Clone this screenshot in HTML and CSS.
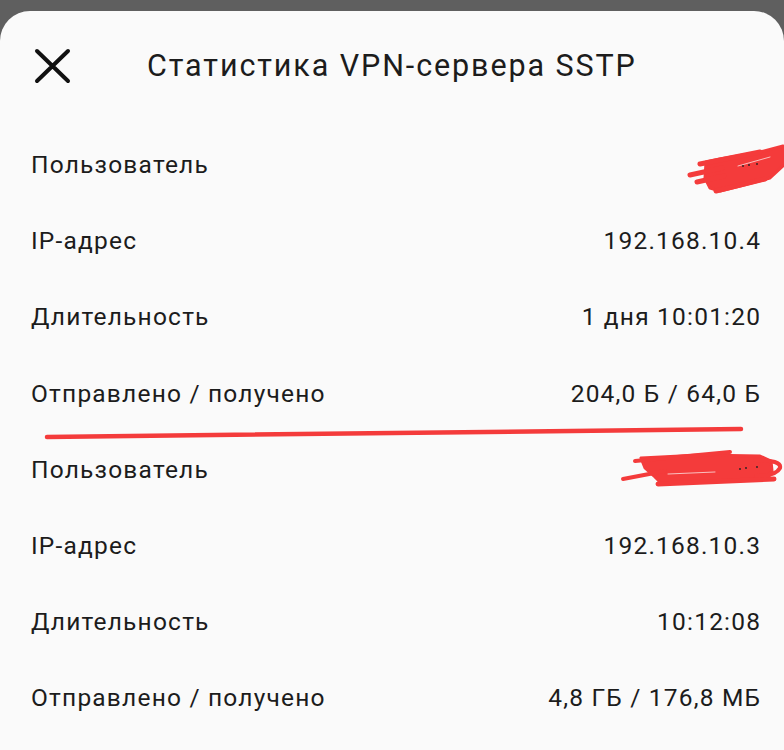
FILE: index.html
```html
<!DOCTYPE html>
<html lang="ru">
<head>
<meta charset="utf-8">
<link rel="stylesheet" href="styles.css">
</head>
<body>
<div class="sheet">
  <div class="header">
    <svg class="close" width="41" height="41" viewBox="0 0 41 41">
      <path d="M5 5 L36 35 M36 5 L5 35" stroke="#111" stroke-width="4" stroke-linecap="round" fill="none"/>
    </svg>
    <div class="title">Статистика VPN-сервера SSTP</div>
  </div>
  <div class="list">
    <div class="row"><span class="label">Пользователь</span><span class="value"></span></div>
    <div class="row"><span class="label">IP-адрес</span><span class="value">192.168.10.4</span></div>
    <div class="row"><span class="label">Длительность</span><span class="value">1 дня 10:01:20</span></div>
    <div class="row"><span class="label">Отправлено / получено</span><span class="value">204,0 Б / 64,0 Б</span></div>
    <div class="row"><span class="label">Пользователь</span><span class="value"></span></div>
    <div class="row"><span class="label">IP-адрес</span><span class="value">192.168.10.3</span></div>
    <div class="row"><span class="label">Длительность</span><span class="value">10:12:08</span></div>
    <div class="row"><span class="label">Отправлено / получено</span><span class="value">4,8 ГБ / 176,8 МБ</span></div>
  </div>
  <svg class="marks" width="784" height="750" viewBox="0 0 784 750">
    <g fill="#f43b3b" stroke="#f43b3b" stroke-width="3" stroke-linejoin="round">
      <path d="M706 162 L720 159 L760 152 L783 146 L784 165 L770 178 L740 186 L720 191 L710 188 L705 178 Z"/>
      <path d="M641 458 L700 455 L760 456 L771 461 L772 471 L768 478 L700 482 L662 484 L655 477 L645 468 Z"/>
    </g>
    <g stroke="#f43b3b" stroke-linecap="round" fill="none">
      <path d="M690 175 L722 168" stroke-width="5"/>
      <path d="M697 182 L724 176" stroke-width="5"/>
      <path d="M716 191 L765 179" stroke-width="5"/>
      <path d="M700 164 L760 152" stroke-width="5"/>
      <path d="M47 437 L741 429" stroke-width="4.5"/>
      <path d="M635 461 L730 452" stroke-width="4"/>
      <path d="M623 479 L665 471" stroke-width="4"/>
      <path d="M658 484 L774 479" stroke-width="5"/>
      <path d="M755 460 Q782 460 780 468 Q776 476 756 476" stroke-width="4"/>
    </g>
    <g stroke="#fbe0e0" stroke-width="1" stroke-linecap="round" fill="none" opacity="0.8">
      <path d="M738 166 L770 157"/>
      <path d="M668 474 L715 472"/>
    </g>
    <g fill="#222">
      <circle cx="743" cy="166" r="0.9"/>
      <circle cx="749" cy="165" r="0.9"/>
      <circle cx="757" cy="164" r="0.9"/>
      <circle cx="740" cy="469" r="0.9"/>
      <circle cx="746" cy="468" r="0.9"/>
      <circle cx="757" cy="467" r="0.9"/>
    </g>
  </svg>
</div>
</body>
</html>
```
FILE: styles.css
```css
html, body {
  margin: 0;
  padding: 0;
  background: #5f5f5f;
  height: 750px;
  overflow: hidden;
}
.sheet {
  position: relative;
  margin-top: 11px;
  height: 739px;
  background: #fafafa;
  border-radius: 30px 30px 0 0;
  font-family: Roboto, "Noto Sans", sans-serif;
  color: #1c1c1c;
}
.header {
  display: flex;
  align-items: center;
  height: 40px;
  padding: 35px 0 41px 32px;
}
.close {
  display: block;
  flex: none;
}
.title {
  margin-left: 74px;
  font-size: 30.5px;
  line-height: 40px;
  letter-spacing: 1.9px;
  white-space: nowrap;
}
.list {
  display: flex;
  flex-direction: column;
}
.row {
  display: flex;
  justify-content: space-between;
  align-items: center;
  height: 76.2px;
  padding: 0 22.8px 0 31px;
  font-size: 24.5px;
  line-height: 34px;
  letter-spacing: 1.2px;
}
.marks {
  position: absolute;
  left: 0;
  top: -11px;
  pointer-events: none;
}
```
